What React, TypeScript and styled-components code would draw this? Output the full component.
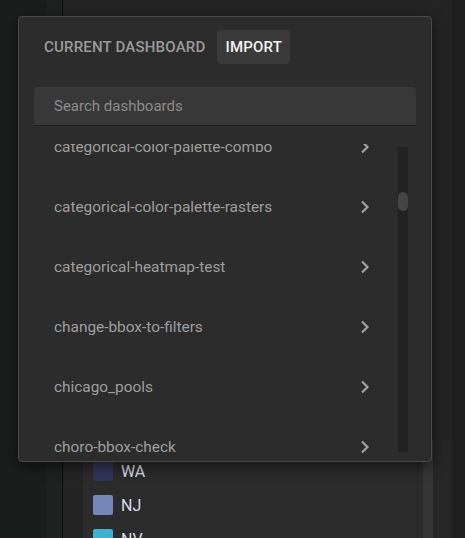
import React from "react";
import styled, { createGlobalStyle } from "styled-components";

const GlobalStyle = createGlobalStyle`
  html, body {
    margin: 0;
    padding: 0;
    background: #1b1c1c;
  }
  body {
    font-family: Roboto, "Liberation Sans", Arial, sans-serif;
  }
`;

const Page = styled.div`
  position: relative;
  display: flex;
  width: 465px;
  height: 538px;
  overflow: hidden;
`;

const Rail = styled.div<{ $w: number; $bg: string }>`
  flex: 0 0 ${(p) => p.$w}px;
  background: ${(p) => p.$bg};
`;

const Main = styled.div`
  flex: 1;
  display: flex;
  flex-direction: column;
  background: #242424;
  padding-left: 20px;
`;

const LegendArea = styled.div`
  margin-top: 440px;
  display: flex;
  flex: 1;
`;

const LegendCard = styled.div`
  width: 340px;
  background: #2b2b2b;
  padding: 14px 10px 0;
  box-sizing: border-box;
`;

const LegendTrack = styled.div`
  width: 10px;
  background: #353535;
`;

const LegendRest = styled.div`
  flex: 1;
  background: #262626;
`;

const LegendRow = styled.div`
  display: flex;
  align-items: center;
  gap: 8px;
  height: 34px;
`;

const Swatch = styled.span<{ $color: string }>`
  width: 20px;
  height: 20px;
  border-radius: 2px;
  background: ${(p) => p.$color};
`;

const LegendLabel = styled.span`
  font-size: 16px;
  color: #d9dce6;
`;

/* popover that sits over the dashboard */
const Popover = styled.div`
  position: absolute;
  left: 18px;
  top: 16px;
  width: 414px;
  height: 446px;
  box-sizing: border-box;
  background: #2c2c2c;
  border: 1px solid #4a4a4a;
  border-radius: 4px;
  box-shadow: 0 4px 14px rgba(0, 0, 0, 0.55);
  display: flex;
  flex-direction: column;
  overflow: hidden;
`;

const Tabs = styled.div`
  display: flex;
  gap: 4px;
  padding: 13px 0 0 17px;
`;

const Tab = styled.button<{ $active?: boolean }>`
  height: 34px;
  padding: 0 8px;
  border: none;
  border-radius: 4px;
  background: ${(p) => (p.$active ? "#3a3a3a" : "transparent")};
  color: ${(p) => (p.$active ? "#f2f2f2" : "#9b9b9b")};
  font-family: Roboto, "Liberation Sans", Arial, sans-serif;
  font-size: 15px;
  font-weight: 500;
  letter-spacing: 0.2px;
  text-transform: uppercase;
`;

const Search = styled.div`
  margin: 23px 15px 0 15px;
  height: 39px;
  box-sizing: border-box;
  display: flex;
  align-items: center;
  padding-left: 20px;
  background: #383838;
  border-radius: 4px 4px 0 0;
  border-bottom: 1px solid #1e1e1e;
  color: #8c8c8c;
  font-size: 15px;
`;

const ListViewport = styled.div`
  position: relative;
  flex: 1;
  margin-top: 18px;
  overflow: hidden;
`;

const ListInner = styled.div`
  margin-top: -27px;
`;

const Row = styled.div`
  display: flex;
  align-items: center;
  justify-content: space-between;
  height: 60px;
  padding: 0 61px 0 35px;
  color: #9e9e9e;
  font-size: 15.4px;
`;

const Chevron = styled.svg`
  width: 10px;
  height: 14px;
  flex: none;
`;

const ScrollTrack = styled.div`
  position: absolute;
  left: 379px;
  top: 3px;
  width: 10px;
  height: 305px;
  background: #222222;
`;

const ScrollThumb = styled.div`
  margin-top: 45px;
  height: 19px;
  border-radius: 5px;
  background: #454545;
`;

const dashboards = [
  "categorical-color-palette-combo",
  "categorical-color-palette-rasters",
  "categorical-heatmap-test",
  "change-bbox-to-filters",
  "chicago_pools",
  "choro-bbox-check",
];

const legend = [
  { name: "WA", color: "#30365a" },
  { name: "NJ", color: "#7585ba" },
  { name: "NV", color: "#3bb2d3" },
];

const App: React.FC = () => {
  return (
    <Page>
      <GlobalStyle />
      <Rail $w={46} $bg="#1b1c1c" />
      <Rail $w={16} $bg="#1f2020" />
      <Rail $w={1} $bg="#0c0c0c" />
      <Main>
        <LegendArea>
          <LegendCard>
            {legend.map((item) => (
              <LegendRow key={item.name}>
                <Swatch $color={item.color} />
                <LegendLabel>{item.name}</LegendLabel>
              </LegendRow>
            ))}
          </LegendCard>
          <LegendTrack />
          <LegendRest />
        </LegendArea>
      </Main>
      <Rail $w={13} $bg="#1e1e1e" />

      <Popover>
        <Tabs>
          <Tab>Current Dashboard</Tab>
          <Tab $active>Import</Tab>
        </Tabs>
        <Search>Search dashboards</Search>
        <ListViewport>
          <ListInner>
            {dashboards.map((name) => (
              <Row key={name}>
                <span>{name}</span>
                <Chevron viewBox="0 0 10 14">
                  <path
                    d="M2 1.5 L7.5 7 L2 12.5"
                    fill="none"
                    stroke="#a0a0a0"
                    strokeWidth="2.2"
                  />
                </Chevron>
              </Row>
            ))}
          </ListInner>
          <ScrollTrack>
            <ScrollThumb />
          </ScrollTrack>
        </ListViewport>
      </Popover>
    </Page>
  );
};

export default App;
